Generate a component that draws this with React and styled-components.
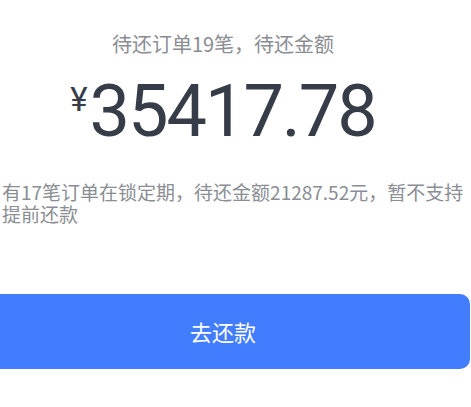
import React from 'react';
import styled, { createGlobalStyle } from 'styled-components';

const GlobalStyle = createGlobalStyle`
  html, body {
    margin: 0;
    padding: 0;
    background: #ffffff;
    overflow: hidden;
  }
  body {
    font-family: "Noto Sans CJK SC", "Noto Sans", sans-serif;
  }
`;

const Page = styled.div`
  width: 494px;
  margin-left: -24px;
  padding-top: 32px;
  display: flex;
  flex-direction: column;
  align-items: center;
`;

const Title = styled.div`
  font-size: 20px;
  line-height: 24px;
  color: #8a8d93;
`;

const AmountRow = styled.div`
  display: flex;
  align-items: flex-start;
  margin-top: 19.5px;
  color: #363c48;
  font-family: Roboto, "Noto Sans", sans-serif;
`;

const Currency = styled.span`
  font-size: 33px;
  line-height: 1;
  margin-top: 7.5px;
  margin-right: 2px;
`;

const Amount = styled.span`
  font-size: 72px;
  line-height: 1;
  letter-spacing: -2px;
`;

const Notice = styled.div`
  align-self: stretch;
  box-sizing: border-box;
  margin-top: 33px;
  padding-left: 26px;
  padding-right: 4px;
  font-size: 19px;
  line-height: 22.5px;
  color: #8a8d93;
`;

const PayButton = styled.button`
  align-self: stretch;
  margin-top: 68px;
  height: 75px;
  border: none;
  border-radius: 10px;
  background: #427cff;
  color: #ffffff;
  font-family: "Noto Sans CJK SC", "Noto Sans", sans-serif;
  font-size: 22px;
  cursor: pointer;
`;

export default function App() {
  return (
    <>
      <GlobalStyle />
      <Page>
        <Title>待还订单19笔，待还金额</Title>
        <AmountRow>
          <Currency>¥</Currency>
          <Amount>35417.78</Amount>
        </AmountRow>
        <Notice>有17笔订单在锁定期，待还金额21287.52元，暂不支持提前还款</Notice>
        <PayButton>去还款</PayButton>
      </Page>
    </>
  );
}
